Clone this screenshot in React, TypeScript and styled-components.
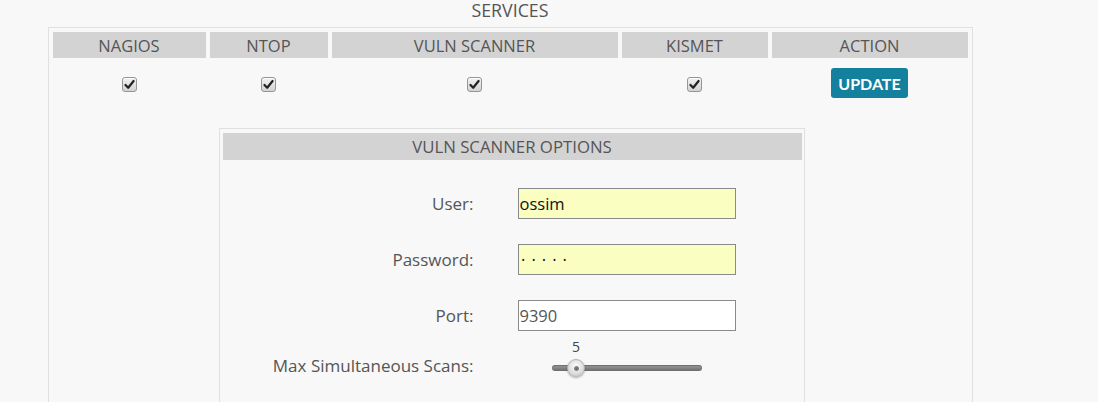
import React, { useState } from 'react'
import styled, { createGlobalStyle } from 'styled-components'

const GlobalStyle = createGlobalStyle`
  body {
    margin: 0;
    background: #f8f8f8;
    font-family: "Open Sans", "Liberation Sans", sans-serif;
    color: #555;
  }
`

const Page = styled.div`
  width: 1020px;
`

const Title = styled.div`
  text-align: center;
  font-size: 17.8px;
  line-height: 20px;
  margin-bottom: 7px;
  color: #555;
`

const ServicesTable = styled.table`
  width: 924px;
  margin: 0 auto;
  border: 1px solid #e0e0e0;
  border-spacing: 4px;
  table-layout: fixed;
`

const HeadCell = styled.th<{ $width: number }>`
  width: ${p => p.$width}px;
  height: 26px;
  padding: 0;
  background: #d3d3d3;
  font-weight: normal;
  font-size: 16.5px;
  color: #555;
  text-align: center;
`

const Cell = styled.td`
  padding: 6px 0;
  text-align: center;
  vertical-align: middle;
`

const CheckBox = styled.span<{ $checked: boolean }>`
  display: inline-flex;
  align-items: center;
  justify-content: center;
  width: 13px;
  height: 13px;
  border: 1px solid #959595;
  border-radius: 3px;
  background: linear-gradient(#f2f2f2, #d2d2d2);
  box-shadow: inset 0 1px 0 #fff;
  cursor: pointer;
  vertical-align: middle;

  svg {
    visibility: ${p => (p.$checked ? 'visible' : 'hidden')};
  }
`

const UpdateButton = styled.button`
  width: 77px;
  height: 30px;
  border: none;
  border-radius: 3px;
  background: #13819d;
  color: #fff;
  font-family: Lato, "Open Sans", sans-serif;
  font-weight: bold;
  font-size: 16px;
  padding: 0;
  cursor: pointer;
`

const OptionsCell = styled.td`
  padding: 20px 0 0 3px;
`

const OptionsPanel = styled.div`
  width: 579px;
  margin: 0 auto;
  border: 1px solid #e0e0e0;
  padding: 4px 2px 20px 3px;
`

const PanelHeader = styled.div`
  height: 27px;
  line-height: 27px;
  background: #d3d3d3;
  text-align: center;
  font-size: 16.8px;
  color: #555;
`

const Form = styled.div`
  display: grid;
  grid-template-columns: 251px 1fr;
  grid-template-rows: 56px 56px 56px 44px;
  column-gap: 44px;
  align-items: center;
  padding-top: 15px;
`

const Label = styled.label`
  text-align: right;
  font-size: 17px;
  color: #555;
`

const TextInput = styled.input<{ $highlight?: boolean }>`
  box-sizing: border-box;
  width: 218px;
  height: 31px;
  border: 1px solid #8a8a8a;
  background: ${p => (p.$highlight ? '#fafec0' : '#fff')};
  font-family: "Open Sans", sans-serif;
  font-size: 16.5px;
  color: ${p => (p.$highlight ? '#111' : '#555')};
  padding: 0 1px;
  outline: none;
`

const PasswordInput = styled(TextInput)`
  font-size: 9px;
  letter-spacing: 7px;
  padding-left: 3px;
  color: #111;
`

const SliderWrap = styled.div`
  align-self: start;
  margin-top: -3px;
  margin-left: 34px;
  display: flex;
  flex-direction: column;
`

const SliderValue = styled.div`
  width: 18px;
  text-align: center;
  font-size: 14px;
  color: #444;
  height: 14px;
  line-height: 14px;
  margin-bottom: 11px;
`

const Track = styled.div`
  display: flex;
  align-items: center;
  width: 150px;
  height: 6px;
  border-radius: 3px;
  background: linear-gradient(#a0a0a0, #6a6a6a);
  box-shadow: inset 0 1px 1px rgba(0, 0, 0, 0.3);
`

const Handle = styled.div`
  flex: none;
  box-sizing: border-box;
  width: 18px;
  height: 18px;
  border-radius: 50%;
  border: 1px solid #b5b5b5;
  background: radial-gradient(circle at 50% 40%, #ffffff, #d2d2d2 75%);
  box-shadow: 0 1px 2px rgba(0, 0, 0, 0.3);
  display: flex;
  align-items: center;
  justify-content: center;

  &::after {
    content: '';
    width: 5px;
    height: 5px;
    border-radius: 50%;
    background: radial-gradient(#666, #999);
  }
`

function Check({ checked }: { checked: boolean }) {
  return (
    <CheckBox $checked={checked} role="checkbox" aria-checked={checked}>
      <svg width="11" height="11" viewBox="0 0 11 11">
        <path d="M1.5 6 L4.2 8.8 L9.6 2" fill="none" stroke="#222" strokeWidth="2.2" strokeLinecap="round" strokeLinejoin="round" />
      </svg>
    </CheckBox>
  )
}

const columns = [
  { name: 'NAGIOS', width: 153 },
  { name: 'NTOP', width: 118 },
  { name: 'VULN SCANNER', width: 286 },
  { name: 'KISMET', width: 146 },
  { name: 'ACTION', width: 196 },
]

export default function App() {
  const [checked] = useState([true, true, true, true])
  const maxScans = 5
  const min = 1
  const max = 35
  // handle travels the track width minus its own width
  const offset = ((maxScans - min) / (max - min)) * (150 - 18)

  return (
    <Page>
      <GlobalStyle />
      <Title>SERVICES</Title>
      <ServicesTable>
        <thead>
          <tr>
            {columns.map(c => (
              <HeadCell key={c.name} $width={c.width}>{c.name}</HeadCell>
            ))}
          </tr>
        </thead>
        <tbody>
          <tr>
            {checked.map((c, i) => (
              <Cell key={`svc-${i}`}><Check checked={c} /></Cell>
            ))}
            <Cell><UpdateButton>UPDATE</UpdateButton></Cell>
          </tr>
          <tr>
            <OptionsCell colSpan={5}>
              <OptionsPanel>
                <PanelHeader>VULN SCANNER OPTIONS</PanelHeader>
                <Form>
                  <Label>User:</Label>
                  <TextInput $highlight defaultValue="ossim" />
                  <Label>Password:</Label>
                  <PasswordInput $highlight type="password" defaultValue="ossim" />
                  <Label>Port:</Label>
                  <TextInput defaultValue="9390" />
                  <Label>Max Simultaneous Scans:</Label>
                  <SliderWrap>
                    <SliderValue style={{ marginLeft: offset + 'px' }}>{maxScans}</SliderValue>
                    <Track>
                      <Handle style={{ marginLeft: offset + 'px' }} />
                    </Track>
                  </SliderWrap>
                </Form>
              </OptionsPanel>
            </OptionsCell>
          </tr>
        </tbody>
      </ServicesTable>
    </Page>
  )
}
